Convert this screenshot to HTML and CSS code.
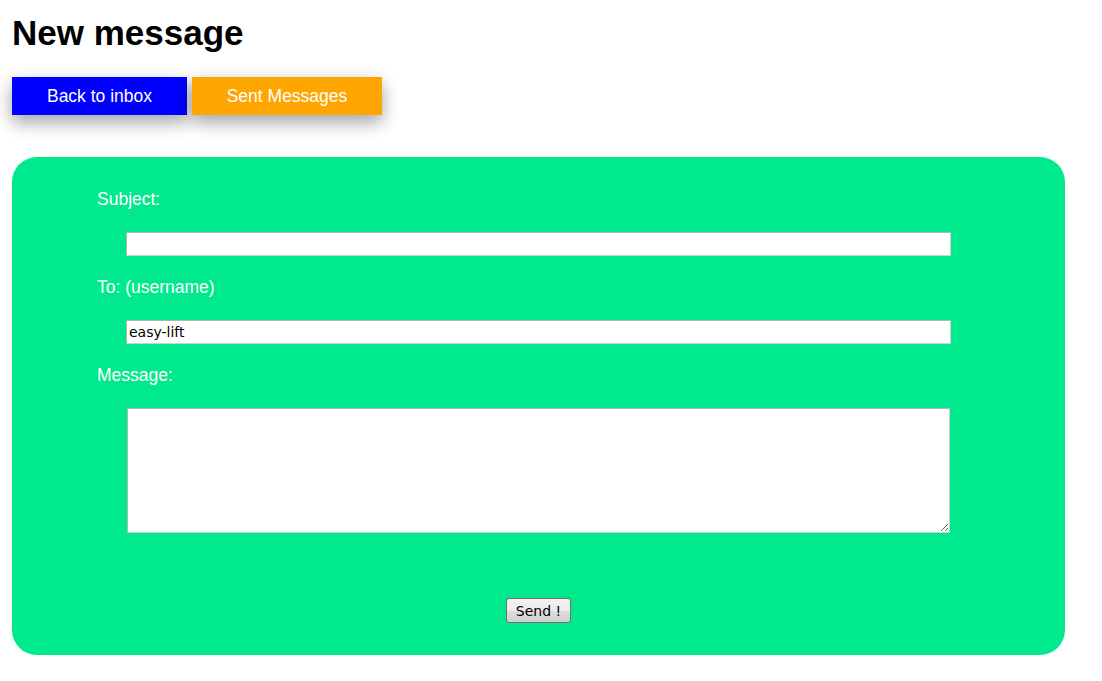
FILE: index.html
```html
<!DOCTYPE html>
<html>
<head>
<meta charset="utf-8">
<link rel="stylesheet" href="styles.css">
</head>
<body>
<h1 class="title">New message</h1>
<div class="nav">
  <a class="nav-btn nav-blue" href="#">Back to inbox</a>
  <a class="nav-btn nav-orange" href="#">Sent Messages</a>
</div>
<form class="panel">
  <label class="field-label">Subject:</label>
  <input class="field-input" type="text" value="">
  <label class="field-label">To: (username)</label>
  <input class="field-input" type="text" value="easy-lift">
  <label class="field-label">Message:</label>
  <textarea class="field-area"></textarea>
  <div class="actions"><button class="send" type="button">Send !</button></div>
</form>
</body>
</html>
```
FILE: styles.css
```css
html, body { margin: 0; padding: 0; background: #fff; }
body {
  padding: 0 12px;
  font-family: "Liberation Sans", Arial, sans-serif;
}
.title {
  margin: 0;
  padding-top: 13px;
  font-size: 35px;
  line-height: 40px;
  font-weight: bold;
  color: #000;
}
.nav {
  display: flex;
  gap: 5px;
  margin-top: 24px;
}
.nav-btn {
  display: flex;
  align-items: center;
  justify-content: center;
  height: 38px;
  color: #fff;
  text-decoration: none;
  font-size: 17.5px;
  box-shadow: 0 8px 16px 0 rgba(0,0,0,0.2), 0 6px 20px 0 rgba(0,0,0,0.19);
}
.nav-blue { width: 175px; background: #0000ff; }
.nav-orange { width: 190px; background: #ffa500; }
.panel {
  margin-top: 42px;
  width: 1053px;
  height: 498px;
  box-sizing: border-box;
  background: #00e98c;
  border-radius: 25px;
  padding: 31px 0 0 85px;
  display: flex;
  flex-direction: column;
  align-items: flex-start;
}
.field-label {
  color: #fff;
  font-size: 17.5px;
  line-height: 22px;
  height: 22px;
}
.field-input {
  margin: 22px 0 20px 29px;
  width: 825px;
  height: 24px;
  box-sizing: border-box;
  border: 1px solid #b4b4b4;
  border-right-color: #d0d0d0;
  border-bottom-color: #d0d0d0;
  padding: 0 2px;
  font-family: "DejaVu Sans", Tahoma, sans-serif;
  font-size: 14px;
  color: #000;
  background: #fff;
  outline: none;
}
.field-area {
  margin: 22px 0 0 30px;
  width: 823px;
  height: 125px;
  box-sizing: border-box;
  border: 1px solid #b4b4b4;
  border-right-color: #d0d0d0;
  border-bottom-color: #d0d0d0;
  background: #fff;
  resize: both;
  font-family: "DejaVu Sans", Tahoma, sans-serif;
  font-size: 13px;
}
.actions {
  align-self: stretch;
  margin-left: -85px;
  margin-top: 65px;
  display: flex;
  justify-content: center;
}
.send {
  width: 65px;
  height: 25px;
  box-sizing: border-box;
  border: 1px solid #707070;
  border-radius: 3px;
  background: linear-gradient(#f2f2f2 0%, #ebebeb 50%, #dddddd 51%, #cfcfcf 100%);
  font-family: "DejaVu Sans", Tahoma, sans-serif;
  font-size: 14px;
  color: #000;
  padding: 0;
}
```
